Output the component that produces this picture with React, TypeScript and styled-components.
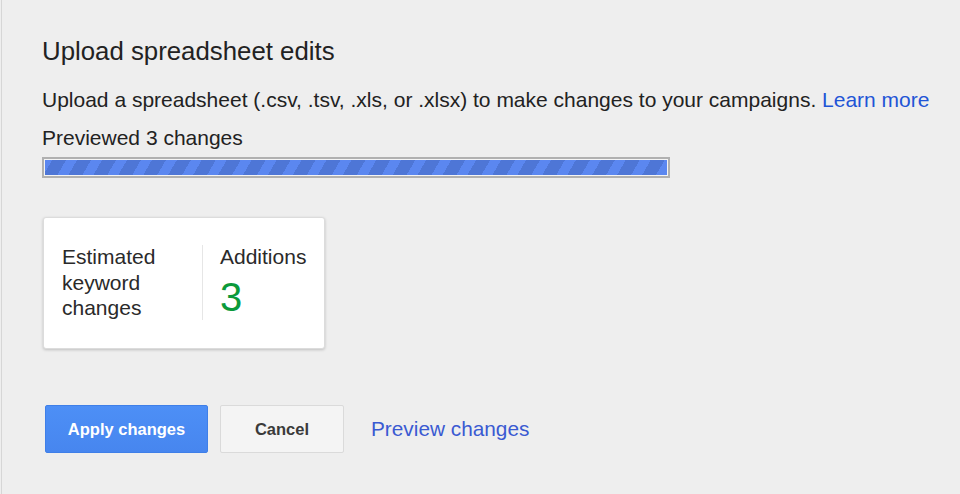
import React from 'react';
import styled, { createGlobalStyle } from 'styled-components';

const GlobalStyle = createGlobalStyle`
  html, body {
    margin: 0;
    padding: 0;
    background: #eeeeee;
  }
  body {
    font-family: "Liberation Sans", Arial, sans-serif;
    color: #222;
  }
`;

const Page = styled.div`
  box-sizing: border-box;
  width: 960px;
  height: 494px;
  background: #eeeeee;
  border-left: 1px solid #d6d6d6;
  margin-left: 1px;
  padding: 36px 0 0 40px;
`;

const Title = styled.h1`
  margin: 0;
  font-size: 25.8px;
  font-weight: normal;
  line-height: 30px;
  color: #222;
`;

const Description = styled.p`
  margin: 21px 0 0;
  font-size: 21px;
  line-height: 26px;
`;

const Link = styled.a`
  color: #1f55d6;
  text-decoration: none;
  cursor: pointer;
`;

const Status = styled.div`
  margin-top: 13px;
  font-size: 21px;
  line-height: 24px;
`;

const Progress = styled.div`
  box-sizing: border-box;
  margin-top: 7px;
  width: 628px;
  height: 21px;
  border: 2px solid #b0b0b0;
  padding: 1px;
  background: #f4f4f4;
`;

const ProgressFill = styled.div`
  height: 100%;
  background: repeating-linear-gradient(
    -60deg,
    #5b87f0 0,
    #5b87f0 9.5px,
    #4e76d6 9.5px,
    #4e76d6 21.6px
  );
`;

const Card = styled.div`
  box-sizing: border-box;
  margin-top: 39px;
  margin-left: 1px;
  width: 282px;
  height: 132px;
  background: #fff;
  border: 1px solid #dcdcdc;
  border-radius: 3px;
  box-shadow: 0 1px 3px rgba(0, 0, 0, 0.2);
  display: flex;
  align-items: flex-start;
  padding: 26px 0 0 18px;
`;

const Label = styled.div`
  width: 140px;
  font-size: 21px;
  line-height: 25.5px;
  color: #2a2a2a;
`;

const Divider = styled.div`
  width: 1px;
  height: 75px;
  margin-top: 1px;
  background: #e6e6e6;
`;

const Metric = styled.div`
  padding-left: 17px;
  display: flex;
  flex-direction: column;
`;

const MetricName = styled.div`
  font-size: 21px;
  line-height: 25.5px;
  color: #2a2a2a;
`;

const MetricValue = styled.div`
  margin-top: 7px;
  font-size: 40px;
  line-height: 40px;
  color: #0b9a3b;
`;

const Actions = styled.div`
  margin-top: 56px;
  margin-left: 3px;
  display: flex;
  align-items: center;
  gap: 12px;
`;

const Button = styled.button<{ $primary?: boolean }>`
  box-sizing: border-box;
  height: 48px;
  width: ${(p) => (p.$primary ? '163px' : '124px')};
  padding: 0;
  border-radius: 2px;
  font-family: "Liberation Sans", Arial, sans-serif;
  font-size: 16.5px;
  font-weight: bold;
  cursor: pointer;
  border: 1px solid ${(p) => (p.$primary ? '#3f7fe8' : '#dadada')};
  background: ${(p) =>
    p.$primary ? 'linear-gradient(#4d8ff6, #4786ef)' : '#f4f4f4'};
  color: ${(p) => (p.$primary ? '#fff' : '#3a3a3a')};
`;

const PreviewLink = styled(Link)`
  margin-left: 15px;
  font-size: 20.8px;
  color: #3a5ad2;
`;

export default function App() {
  return (
    <>
      <GlobalStyle />
      <Page>
        <Title>Upload spreadsheet edits</Title>
        <Description>
          Upload a spreadsheet (.csv, .tsv, .xls, or .xlsx) to make changes to your campaigns.{' '}
          <Link>Learn more</Link>
        </Description>
        <Status>Previewed 3 changes</Status>
        <Progress>
          <ProgressFill />
        </Progress>
        <Card>
          <Label>
            Estimated
            <br />
            keyword
            <br />
            changes
          </Label>
          <Divider />
          <Metric>
            <MetricName>Additions</MetricName>
            <MetricValue>3</MetricValue>
          </Metric>
        </Card>
        <Actions>
          <Button $primary>Apply changes</Button>
          <Button>Cancel</Button>
          <PreviewLink>Preview changes</PreviewLink>
        </Actions>
      </Page>
    </>
  );
}
